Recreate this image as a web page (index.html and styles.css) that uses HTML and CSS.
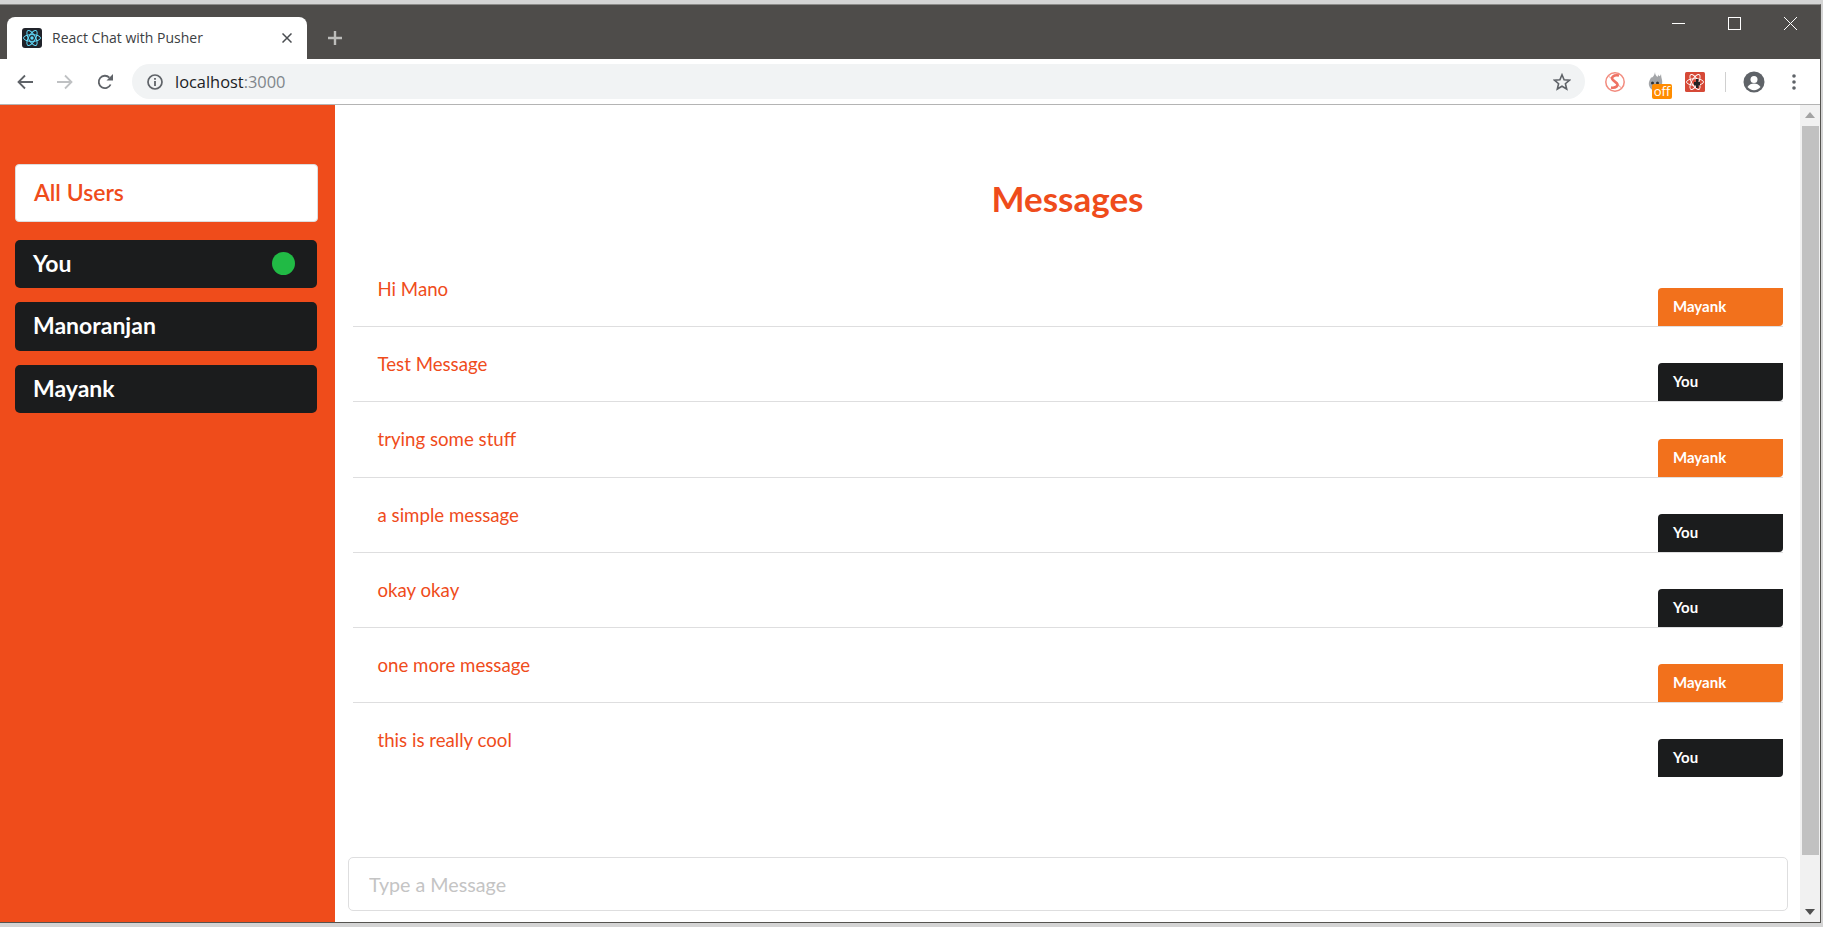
FILE: index.html
```html
<!DOCTYPE html>
<html lang="en">
<head>
<meta charset="utf-8">
<title>React Chat with Pusher</title>
<link rel="stylesheet" href="styles.css">
</head>
<body>
<div class="window">
  <div class="titlebar">
    <div class="tab">
      <svg class="favicon" viewBox="0 0 20 20"><rect width="20" height="20" rx="3" fill="#20232a"/><g fill="none" stroke="#61dafb" stroke-width="1"><ellipse cx="10" cy="10" rx="8.5" ry="3.4"/><ellipse cx="10" cy="10" rx="8.5" ry="3.4" transform="rotate(60 10 10)"/><ellipse cx="10" cy="10" rx="8.5" ry="3.4" transform="rotate(120 10 10)"/></g><circle cx="10" cy="10" r="1.7" fill="#61dafb"/></svg>
      <span class="tab-title">React Chat with Pusher</span>
      <svg class="tab-close" viewBox="0 0 10 10"><path d="M.5.5l9 9M9.500.5l-9 9" stroke="#4a4d51" stroke-width="1.500" fill="none"/></svg>
    </div>
    <svg class="new-tab" viewBox="0 0 14 14"><path d="M7 0v14M0 7h14" stroke="#bdbdbb" stroke-width="2.400" fill="none"/></svg>
    <div class="win-controls">
      <svg class="win-btn" viewBox="0 0 13 13"><path d="M0 6.500h13" stroke="#fff" fill="none"/></svg>
      <svg class="win-btn" viewBox="0 0 13 13"><rect x=".5" y=".5" width="12" height="12" stroke="#fff" fill="none"/></svg>
      <svg class="win-btn" viewBox="0 0 13 13"><path d="M0 0l13 13M13 0L0 13" stroke="#fff" fill="none"/></svg>
    </div>
  </div>
  <div class="toolbar">
    <svg class="nav-icon" viewBox="0 0 16 16"><path d="M16 8H2M8 1.500L1.500 8 8 14.500" stroke="#5f6368" stroke-width="1.800" fill="none"/></svg>
    <svg class="nav-icon" viewBox="0 0 16 16"><path d="M0 8h14M8 1.500L14.500 8 8 14.500" stroke="#bfc1c3" stroke-width="1.800" fill="none"/></svg>
    <svg class="nav-icon" viewBox="0 0 16 16"><path d="M13.600 10.500A6.200 6.200 0 1 1 12.400 3.600" stroke="#5f6368" stroke-width="1.800" fill="none"/><path d="M9.500 6.500H16V0z" fill="#5f6368"/></svg>
    <div class="omnibox">
      <svg class="info-icon" viewBox="0 0 16 16"><circle cx="8" cy="8" r="7" stroke="#5f6368" stroke-width="1.700" fill="none"/><path d="M7.100 7h1.800v5H7.100zM7.100 4h1.800v1.800H7.100z" fill="#5f6368"/></svg>
      <span class="url">localhost<span class="url-port">:3000</span></span>
      <svg class="star-icon" viewBox="0 0 18 18"><path d="M9 1.800l2.100 5 5.400.4-4.100 3.500 1.300 5.300L9 13.200l-4.700 2.800 1.300-5.300-4.100-3.500 5.400-.4z" stroke="#5f6368" stroke-width="1.600" fill="none"/></svg>
    </div>
    <div class="extensions">
      <svg class="ext-icon" viewBox="0 0 20 20"><circle cx="10" cy="10" r="9.200" stroke="#f28b7e" stroke-width="1.500" fill="#fff"/><path d="M3.500 4l13 12" stroke="#f59a8e" stroke-width="1"/><path d="M14 3.500C8.500 2.500 5.500 5.500 8 8l4 3.500c1.500 2-1 5-6 4" stroke="#ee7264" stroke-width="2.600" fill="none"/></svg>
      <div class="ext-flame">
        <svg class="flame-icon" viewBox="0 0 18 20"><path d="M8 0c0 3 1.500 4 2.500 5 .5-1 .5-2 1-2.500 0 2 1.500 2.500 2.500-.5 0 2 .5 4 1 6 1 4-1 10-6.500 10.500C4 19 1 14 2 10c.5-2 1.500-3 2-4.500C6 6 7.500 3 8 0z" fill="#a4a6a9"/><circle cx="5.500" cy="11" r="1.500" fill="#333"/><circle cx="10.500" cy="11" r="1.500" fill="#333"/></svg>
        <span class="off-badge">off</span>
      </div>
      <svg class="ext-icon" viewBox="0 0 20 20"><rect width="20" height="20" rx="1.500" fill="#d64937"/><g fill="none" stroke="#fff" stroke-width=".9"><ellipse cx="10" cy="10" rx="8.500" ry="3.300"/><ellipse cx="10" cy="10" rx="8.500" ry="3.300" transform="rotate(60 10 10)"/><ellipse cx="10" cy="10" rx="8.500" ry="3.300" transform="rotate(120 10 10)"/></g><path d="M11 7h2.500v3H15v3.500h-1.500V16H11v-2.500H9V10h2z" fill="#222"/></svg>
    </div>
    <div class="toolbar-sep"></div>
    <svg class="avatar" viewBox="0 0 22 22"><circle cx="11" cy="11" r="10.500" fill="#5f6368"/><circle cx="11" cy="8.500" r="3.500" fill="#fff"/><path d="M4.500 16c1.500-2.500 4-3.500 6.500-3.500s5 1 6.500 3.500c-1.500 2-4 3.200-6.500 3.200S6 18 4.500 16z" fill="#fff"/></svg>
    <svg class="menu-dots" viewBox="0 0 4 16"><circle cx="2" cy="2" r="1.800" fill="#5f6368"/><circle cx="2" cy="8" r="1.800" fill="#5f6368"/><circle cx="2" cy="14" r="1.800" fill="#5f6368"/></svg>
  </div>
  <div class="page">
    <aside class="sidebar">
      <div class="all-users">All Users</div>
      <div class="user-list">
        <div class="user user-you">You<span class="online-dot"></span></div>
        <div class="user user-m">Manoranjan</div>
        <div class="user user-y">Mayank</div>
      </div>
    </aside>
    <main class="chat">
      <h1 class="chat-title">Messages</h1>
      <div class="messages">
        <div class="message"><span class="msg-text">Hi Mano</span><span class="msg-author author-other">Mayank</span></div>
        <div class="message"><span class="msg-text">Test Message</span><span class="msg-author author-you">You</span></div>
        <div class="message"><span class="msg-text">trying some stuff</span><span class="msg-author author-other">Mayank</span></div>
        <div class="message"><span class="msg-text">a simple message</span><span class="msg-author author-you">You</span></div>
        <div class="message"><span class="msg-text">okay okay</span><span class="msg-author author-you">You</span></div>
        <div class="message"><span class="msg-text">one more message</span><span class="msg-author author-other">Mayank</span></div>
        <div class="message message-last"><span class="msg-text">this is really cool</span><span class="msg-author author-you">You</span></div>
      </div>
      <div class="composer"><input class="composer-input" type="text" placeholder="Type a Message"></div>
    </main>
    <div class="scrollbar">
      <div class="scroll-up"></div>
      <div class="scroll-thumb"></div>
      <div class="scroll-down"></div>
    </div>
  </div>
</div>
</body>
</html>
```
FILE: styles.css
```css
* { box-sizing: border-box; }
html, body { margin: 0; height: 100%; overflow: hidden; }
body {
  background: #d4d4d4;
  font-family: Lato, "Liberation Sans", sans-serif;
}
.window {
  width: 1821px;
  height: 919px;
  margin-top: 4px;
  display: flex;
  flex-direction: column;
  border-top: 1px solid #8c8b89;
  border-right: 1px solid #55534f;
  border-bottom: 1px solid #55534f;
  background: #fff;
}

/* browser chrome */
.titlebar {
  height: 54px;
  flex: none;
  background: #4e4c4a;
  display: flex;
  align-items: flex-end;
  padding-left: 7px;
}
.tab {
  width: 300px;
  height: 42px;
  background: #fff;
  border-radius: 8px 8px 0 0;
  display: flex;
  align-items: center;
  padding: 0 15px;
}
.favicon { width: 20px; height: 20px; flex: none; }
.tab-title {
  margin: 0 0 2px 10px;
  flex: 1;
  font: 14px "Open Sans", sans-serif;
  color: #3c4043;
}
.tab-close { width: 10px; height: 10px; flex: none; }
.new-tab { width: 14px; height: 14px; margin: 0 0 14px 21px; flex: none; }
.win-controls {
  margin-left: auto;
  align-self: flex-start;
  display: flex;
  gap: 43px;
  padding: 12px 23px 0 0;
}
.win-btn { width: 13px; height: 13px; }
.toolbar {
  height: 46px;
  flex: none;
  background: #fff;
  border-bottom: 1px solid #b4b4b4;
  display: flex;
  align-items: center;
  padding-left: 17px;
}
.nav-icon { width: 16px; height: 16px; flex: none; margin-right: 24px; }
.omnibox {
  width: 1453px;
  height: 35px;
  margin-left: -5px;
  border-radius: 18px;
  background: #f1f3f4;
  display: flex;
  align-items: center;
  padding: 0 14px 0 15px;
}
.info-icon { width: 16px; height: 16px; flex: none; }
.url { margin-left: 12px; flex: 1; font: 16.4px "Open Sans", sans-serif; color: #202124; }
.url-port { color: #80868b; }
.star-icon { width: 18px; height: 18px; flex: none; }
.extensions { display: flex; align-items: center; gap: 22px; margin-left: 20px; }
.ext-icon { width: 20px; height: 20px; flex: none; }
.ext-flame { width: 16px; height: 20px; position: relative; }
.flame-icon { width: 18px; height: 20px; display: block; }
.off-badge {
  position: absolute;
  left: 5px;
  top: 12px;
  width: 20px;
  height: 15px;
  border-radius: 2px;
  background: #ff8c00;
  color: #fff;
  font: 13px/15px "Open Sans", sans-serif;
  text-align: center;
}
.toolbar-sep { width: 1px; height: 20px; background: #d0d0d0; margin: 0 17px 0 20px; flex: none; }
.avatar { width: 22px; height: 22px; flex: none; }
.menu-dots { width: 4px; height: 16px; flex: none; margin-left: 27px; }

/* page */
.page { flex: 1; min-height: 0; display: flex; }
.sidebar {
  width: 335px;
  flex: none;
  background: #ef4c1b;
  padding: 59px 17px 0 15px;
}
.all-users {
  height: 58px;
  width: 303px;
  padding-left: 18px;
  background: #fff;
  border: 1px solid #ddd;
  border-radius: 4px;
  color: #ef4c1b;
  font-size: 23px;
  line-height: 54px;
  font-weight: 600;
}
.user-list { margin-top: 18px; display: flex; flex-direction: column; gap: 14px; }
.user {
  height: 48px;
  width: 302px;
  padding: 0 22px 2px 18px;
  border-radius: 5px;
  background: #1b1c1d;
  color: #fff;
  font-size: 23px;
  font-weight: 700;
  display: flex;
  align-items: center;
  justify-content: space-between;
}
.user-m { height: 49px; padding-bottom: 3px; }
.online-dot { width: 23px; height: 23px; border-radius: 50%; background: #21ba45; }
.chat {
  flex: 1;
  min-width: 0;
  display: flex;
  flex-direction: column;
  padding: 0 0 11px 0;
}
.chat-title {
  margin: 0;
  padding-top: 71px;
  text-align: center;
  font-size: 35px;
  line-height: 44px;
  font-weight: 700;
  color: #ef4c1b;
}
.messages { margin: 32px 17px 0 18px; flex: 1; }
.message {
  height: 75.2px;
  border-bottom: 1px solid #dededf;
  display: flex;
  justify-content: space-between;
  align-items: flex-end;
  padding-left: 24.500px;
}
.message-last { border-bottom: 0; height: 74px; }
.msg-text {
  align-self: flex-start;
  margin-top: 24px;
  font-size: 18.670px;
  line-height: 26px;
  color: #ef4c1b;
}
.msg-author {
  width: 125px;
  height: 38px;
  padding-left: 15px;
  border-radius: 4px 0 4px 0;
  color: #fff;
  font-size: 15px;
  font-weight: 700;
  line-height: 37px;
}
.author-other { background: #f2711c; }
.author-you { background: #1b1c1d; }
.composer { padding: 0 12px 0 13px; }
.composer-input {
  display: block;
  width: 100%;
  height: 54px;
  padding: 0 20px;
  border: 1px solid #dededf;
  border-radius: 5px;
  background: #fff;
  font: 19.700px Lato, sans-serif;
  outline: none;
}
.composer-input::placeholder { color: #c4c4c4; opacity: 1; }
.scrollbar {
  width: 20px;
  flex: none;
  background: #f1f1f1;
  display: flex;
  flex-direction: column;
  align-items: center;
}
.scroll-up, .scroll-down { width: 0; height: 0; border-left: 5px solid transparent; border-right: 5px solid transparent; flex: none; }
.scroll-up { margin-top: 7px; border-bottom: 6px solid #a3a3a3; }
.scroll-thumb { width: 17px; flex: 1; margin: 8px 0 54px; background: #c1c1c1; }
.scroll-down { margin-bottom: 7px; border-top: 6px solid #505050; }
```
